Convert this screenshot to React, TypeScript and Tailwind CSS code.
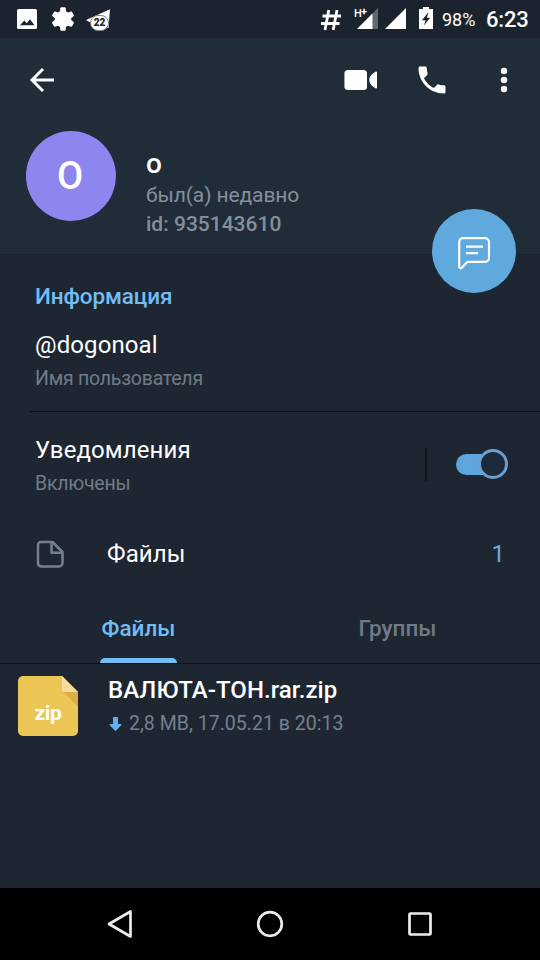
import type { ReactNode } from 'react';

type Tab = { label: string; active: boolean };

const tabs: Tab[] = [
  { label: 'Файлы', active: true },
  { label: 'Группы', active: false },
];

function StatusBar() {
  return (
    <div className="flex h-[38px] items-start bg-[#1b242e] text-white">
      {/* Notifications */}
      <svg className="mt-2 ml-[17px] h-[22px] w-5" viewBox="0 0 20 22" fill="currentColor">
        <path
          fillRule="evenodd"
          d="M1.500 1h17A1.500 1.500 0 0 1 20 2.500v17a1.500 1.500 0 0 1-1.500 1.500h-17A1.500 1.500 0 0 1 0 19.500v-17A1.500 1.500 0 0 1 1.500 1ZM3 17.200h14.500L13 11.200l-3.200 4.100L7.300 12.400 3 17.200Z"
        />
      </svg>
      <svg className="mt-[7px] ml-[14px] h-6 w-6" viewBox="0 0 24 24" fill="currentColor">
        <path d="M9.300 1 10 .2h4l.7.800.3 3.200 2 1.200 3-1 .9.300 2 3.500-.2 1-2.500 1.900v2l2.500 1.900.2 1-2 3.500-.9.300-3-1-2 1.200-.3 3-.7.800h-4l-.7-.8-.3-3-2-1.200-3 1-.9-.3-2-3.500.2-1 2.500-1.900v-2L1.300 9.200l-.2-1 2-3.500.9-.3 3 1 2-1.200Z" />
      </svg>
      <div className="relative mt-2 ml-[11px] h-6 w-[26px]">
        <svg className="h-6 w-[26px]" viewBox="0 0 26 24">
          <path d="M0 12 24 1.200 22.500 20 6 15.500Z" fill="#fff" />
          <rect x="4.500" y="7.500" width="18" height="15" rx="7.500" fill="#fff" stroke="#7d8287" strokeWidth="1" />
        </svg>
        <span className="absolute top-[9px] left-[4px] w-[19px] text-center text-[10px] leading-3 font-black text-[#1b242e]">
          22
        </span>
      </div>

      {/* Signal, battery and clock */}
      <svg className="mt-[9px] ml-[209px] h-[22px] w-5" viewBox="0 0 20 22" fill="none" stroke="currentColor" strokeWidth="2.800">
        <path d="M7.800 1 4 21M16 1l-3.800 20M1.500 7h18.500M0 14.500h18.500" />
      </svg>
      <div className="relative mt-[7px] ml-[13px] h-[23px] w-6">
        <svg className="h-[23px] w-6" viewBox="0 0 24 23">
          <path d="M3 22 24 1v21Z" fill="#5f676f" />
          <path d="M0 0h14v11H0Z" fill="#1b242e" />
          <path d="M3 22 18.500 6.500V22Z" fill="#fff" />
        </svg>
        <span className="absolute top-px left-0 text-[11px] leading-3 font-medium">H</span>
        <span className="absolute top-0 left-[7px] text-[11px] leading-[10px] font-bold">+</span>
      </div>
      <svg className="mt-2 ml-[7px] h-[22px] w-[21px]" viewBox="0 0 21 22" fill="currentColor">
        <path d="M0 21 21 0v21Z" />
      </svg>
      <svg className="mt-[7px] ml-[13px] h-[22px] w-[14px]" viewBox="0 0 14 22" fill="currentColor">
        <path fillRule="evenodd" d="M4 0h6v2h4v20H0V2h4ZM9.500 5 3 13.200h3.500L5 18.500l6-7.700H7.800Z" />
      </svg>
      <span className="mt-2 ml-[9px] w-[34px] text-[18px] leading-6 whitespace-nowrap">98%</span>
      <span className="mt-[7px] ml-[10px] text-[22px] leading-[26px] font-medium tracking-[-0.2px] whitespace-nowrap">6:23</span>
    </div>
  );
}

function Header() {
  return (
    <header className="relative h-[216px] bg-[#202c38] text-white">
      <div className="flex h-[84px] items-center">
        <svg className="ml-[29px] h-7 w-7" viewBox="0 0 28 28" fill="none" stroke="currentColor" strokeWidth="3">
          <path d="M25 14H3M14 3 3 14l11 11" />
        </svg>
        <svg className="ml-[287px] h-[22px] w-[34px]" viewBox="0 0 34 22" fill="currentColor">
          <rect x="0.400" y="1" width="22.600" height="20" rx="3.500" />
          <path d="M33 3.500v15c0 1-.7 1.200-1.500.7C27 16.500 25.300 14 25.300 11S27 5.500 31.500 2.800c.8-.5 1.500-.3 1.500.7Z" />
        </svg>
        <svg className="ml-[36px] h-9 w-9" viewBox="0 0 24 24" fill="currentColor">
          <path d="M6.620 10.790c1.440 2.830 3.760 5.140 6.590 6.590l2.200-2.200c.27-.27.670-.36 1.020-.24 1.120.37 2.330.57 3.570.57.550 0 1 .45 1 1V20c0 .55-.45 1-1 1-9.390 0-17-7.610-17-17 0-.55.450-1 1-1h3.500c.55 0 1 .45 1 1 0 1.250.2 2.450.57 3.570.11.35.03.740-.25 1.020l-2.200 2.200Z" />
        </svg>
        <svg className="ml-[50px] h-7 w-2" viewBox="0 0 8 28" fill="currentColor">
          <circle cx="4" cy="5" r="3.200" />
          <circle cx="4" cy="14" r="3.200" />
          <circle cx="4" cy="23" r="3.200" />
        </svg>
      </div>

      <div className="flex pt-[9px] pl-[26px]">
        <div className="flex h-[90px] w-[90px] items-center justify-center rounded-full bg-[#8e85ee] text-[38px] leading-none font-medium">
          <span className="-ml-[2px]">O</span>
        </div>
        <div className="ml-[30px] pt-[19px] text-[#83909c]">
          <h1 className="text-[28px] leading-7 font-medium text-white">o</h1>
          <p className="mt-[3px] text-[21px] leading-7 tracking-[-0.1px]">был(а) недавно</p>
          <p className="mt-px text-[21px] leading-7 font-medium">id: 935143610</p>
        </div>
      </div>

      {/* Floating message button */}
      <button className="absolute top-[171px] left-[432px] flex h-[84px] w-[84px] items-center justify-center rounded-full bg-[#5fa9df]">
        <svg className="mt-[2px] h-9 w-9" viewBox="0 0 36 36" fill="none" stroke="#fff" strokeWidth="2.200" strokeLinecap="round" strokeLinejoin="round">
          <path d="M7 4.200h22a4 4 0 0 1 4 4v15.600a4 4 0 0 1-4 4H11.500L6 33.600c-1.100 1-2.800.6-2.800-1V8a3.800 3.800 0 0 1 3.800-3.800Z" />
          <path d="M10 12.700h17M10 19.200h12" strokeLinecap="butt" />
        </svg>
      </button>
    </header>
  );
}

function Setting({ title, subtitle, children }: { title: string; subtitle: string; children?: ReactNode }) {
  return (
    <div className="flex items-center pr-8 pl-[35px]">
      <div>
        <p className="text-[24px] leading-8 tracking-[0.1px] text-white">{title}</p>
        <p className="mt-[6px] text-[19.5px] leading-6 tracking-[-0.23px] text-[#6f7c87]">{subtitle}</p>
      </div>
      {children}
    </div>
  );
}

function FileRow() {
  return (
    <div className="flex pt-3 pl-[18px]">
      <div className="relative h-[60px] w-[60px]">
        <svg className="h-[60px] w-[60px]" viewBox="0 0 60 60">
          <path d="M5 0h39l16 16v39a5 5 0 0 1-5 5H5a5 5 0 0 1-5-5V5a5 5 0 0 1 5-5Z" fill="#ecc655" />
          <path d="M45 15.500h15V31Z" fill="#e0ae48" />
          <path d="M44 0 60 16H46a2 2 0 0 1-2-2Z" fill="#f6dd9e" />
        </svg>
        <span className="absolute top-[25px] left-0 w-full text-center text-[21px] leading-6 font-bold tracking-[-0.3px] text-white">zip</span>
      </div>
      <div className="ml-[30px]">
        <p className="text-[24px] leading-7 font-medium tracking-[0.05px] text-white">ВАЛЮТА-ТОН.rar.zip</p>
        <div className="mt-[8px] flex items-center text-[19.5px] leading-6 tracking-[0.03px] text-[#74818c]">
          <svg className="mr-[7px] ml-px h-[14px] w-[13px]" viewBox="0 0 12 14" fill="#62b0eb">
            <path d="M3.500 1a1 1 0 0 1 1-1h3a1 1 0 0 1 1 1v6h2.600c.9 0 1.200.7.600 1.300l-5 5.200a1 1 0 0 1-1.400 0l-5-5.200C-.3 7.700 0 7 .9 7h2.600Z" />
          </svg>
          2,8 MB, 17.05.21 в 20:13
        </div>
      </div>
    </div>
  );
}

function NavigationBar() {
  return (
    <nav className="flex h-[72px] items-center justify-center gap-[120px] bg-black">
      <svg className="h-[30px] w-[30px]" viewBox="0 0 30 30" fill="none" stroke="#ececec" strokeWidth="2.700" strokeLinejoin="round">
        <path d="M4 15 25.500 2.500v25Z" />
      </svg>
      <svg className="h-[30px] w-[30px]" viewBox="0 0 30 30" fill="none" stroke="#ececec" strokeWidth="2.700">
        <circle cx="15" cy="15" r="11.800" />
      </svg>
      <svg className="h-[30px] w-[30px]" viewBox="0 0 30 30" fill="none" stroke="#ececec" strokeWidth="2.700">
        <rect x="4.500" y="4.500" width="21" height="21" rx="1" />
      </svg>
    </nav>
  );
}

export default function App() {
  return (
    <div className="flex h-[960px] w-[540px] flex-col overflow-hidden bg-[#1e2731] font-['Roboto',sans-serif]">
      <StatusBar />
      <Header />

      <main className="flex-1 border-t border-[#1b242d]">
        <h2 className="pt-[29px] pl-[35px] text-[22.5px] leading-6 font-medium tracking-[-0.1px] text-[#73bdf5]">Информация</h2>
        <div className="mt-[21px]">
          <Setting title="@dogonoal" subtitle="Имя пользователя" />
        </div>
        <div className="mt-5 ml-[30px] h-px bg-[#0b1016]" />

        <div className="mt-[22px]">
          <Setting title="Уведомления" subtitle="Включены">
            <div className="mb-[2px] ml-auto h-[33px] w-[2px] bg-[#11171d]" />
            <div className="mb-[2px] ml-[29px] flex h-[21px] w-[52px] items-center">
              <div className="h-[21px] w-[37px] rounded-full bg-[#5fa5dd]" />
              <div className="-ml-[15px] h-[30px] w-[30px] shrink-0 rounded-full border-3 border-[#6b9fce] bg-[#1c2a3a]" />
            </div>
          </Setting>
        </div>

        <div className="mt-8 flex h-[52px] items-center pr-[35px] pl-[36px] text-[24px] leading-8">
          <svg className="h-7 w-7" viewBox="0 0 28 28" fill="none" stroke="#74818c" strokeWidth="2.500" strokeLinejoin="round">
            <path d="M5 2h11.500L26.500 12v11a3.500 3.500 0 0 1-3.500 3.500H5A3.500 3.500 0 0 1 2 23V5a3 3 0 0 1 3-3Z" />
            <path d="M15.500 2v10.700h11" />
          </svg>
          <span className="ml-[43px] tracking-[0.1px] text-white">Файлы</span>
          <span className="ml-auto text-[#65aee6]">1</span>
        </div>

        <div className="mt-[14px] flex h-[70px] border-b border-[#0b1016] pr-[13px] pl-[9px]">
          {tabs.map((tab) => (
            <div key={tab.label} className="flex flex-1 flex-col items-center pt-[20px]">
              <span className={`text-[22.5px] leading-7 font-medium ${tab.active ? 'text-[#73bdf5]' : 'text-[#6f7c87]'}`}>
                {tab.label}
              </span>
              {tab.active && <div className="mt-auto h-[5px] w-[77px] rounded-t-[5px] bg-[#73bdf5]" />}
            </div>
          ))}
        </div>

        <FileRow />
      </main>

      <NavigationBar />
    </div>
  );
}
